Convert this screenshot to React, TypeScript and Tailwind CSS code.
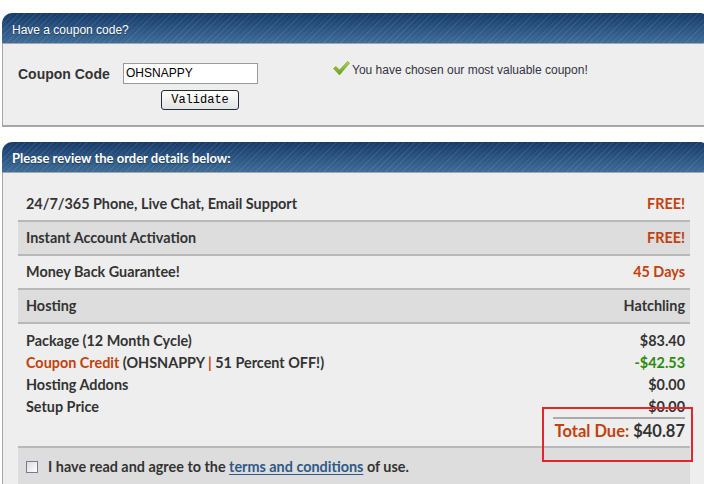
import React from "react";

const headerBg =
  "bg-[image:repeating-linear-gradient(135deg,rgba(255,255,255,0.08)_0px,rgba(255,255,255,0.08)_1px,transparent_1px,transparent_4px),linear-gradient(to_bottom,#163b69,#3e6b97)]";

function Check() {
  return (
    <svg width="17" height="15" viewBox="0 0 17 15">
      <defs>
        <linearGradient id="cg" x1="0" y1="0" x2="0" y2="1">
          <stop offset="0" stopColor="#a8d84a" />
          <stop offset="1" stopColor="#6b9e1c" />
        </linearGradient>
      </defs>
      <path d="M0.5 7.5 L3 5.5 L6.5 9 L14.5 0.5 L16.5 2 L6.5 14 Z" fill="url(#cg)" stroke="#6a9a22" strokeWidth="0.6" />
    </svg>
  );
}

function Row({ label, value, dark, valueClass }: { label: string; value: string; dark?: boolean; valueClass: string }) {
  return (
    <div
      className={`flex items-center justify-between h-[34px] border-b-2 border-[#b8b8b8] pl-[8px] pr-[5px] ${
        dark ? "bg-[#dddddd]" : ""
      }`}
    >
      <span className="text-[#333333]">{label}</span>
      <span className={valueClass}>{value}</span>
    </div>
  );
}

export default function App() {
  const lato = "font-['Lato','Open_Sans',sans-serif] font-bold";
  return (
    <div className="relative w-[704px] h-[484px] overflow-hidden bg-white pt-[13px] pl-[2px]">
      {/* Coupon panel */}
      <section className="w-[706px]">
        <div className={`h-[30px] rounded-tl-[10px] rounded-tr-[8px] ${headerBg} flex items-center pl-[10px] pt-[3px]`}>
          <span className="text-white text-[12px] font-['Liberation_Sans',Arial,sans-serif] [text-shadow:0_1px_1px_rgba(0,0,0,0.35)]">
            Have a coupon code?
          </span>
        </div>
        <div className="h-[84px] bg-[#eeeeee] border-l border-b-2 border-t border-[#a6a6a6] pl-[15px] pt-[19px] font-['Liberation_Sans',Arial,sans-serif]">
          <div className="flex items-start">
            <span className="w-[105px] text-[14px] font-bold text-[#333333] leading-[21px] mt-[1px]">Coupon Code</span>
            <div className="flex flex-col">
              <div className="w-[135px] h-[21px] bg-white border border-[#9a9a9a] text-[12px] leading-[19px] pl-[2px] text-black">
                OHSNAPPY
              </div>
              <button className="ml-[38px] mt-[6px] w-[78px] h-[20px] rounded-[3px] border border-[#1e2d3d] bg-[image:linear-gradient(to_bottom,#ffffff,#e2e2e2)] text-[12px] leading-[18px] font-['Liberation_Mono',monospace] text-black">
                Validate
              </button>
            </div>
            <div className="ml-[75px] -mt-[2px] flex items-start">
              <Check />
              <span className="ml-[2px] mt-[1px] text-[12px] text-[#333344] leading-[16px]">
                You have chosen our most valuable coupon!
              </span>
            </div>
          </div>
        </div>
      </section>

      {/* Order panel */}
      <section className="w-[706px] mt-[15px]">
        <div className={`h-[30px] rounded-tl-[10px] rounded-tr-[8px] ${headerBg} flex items-center pl-[10px] pt-[3px]`}>
          <span className={`text-white text-[13px] ${lato} [text-shadow:0_1px_1px_rgba(0,0,0,0.35)]`}>
            Please review the order details below:
          </span>
        </div>
        <div className={`h-[320px] bg-[#eeeeee] border-l border-t border-[#a6a6a6] pl-[15px] pt-[15px] text-[14.4px] ${lato}`}>
          <div className="w-[672px]">
            <Row label="24/7/365 Phone, Live Chat, Email Support" value="FREE!" valueClass="text-[#c2410c]" />
            <Row label="Instant Account Activation" value="FREE!" dark valueClass="text-[#c2410c]" />
            <Row label="Money Back Guarantee!" value="45 Days" valueClass="text-[#c2410c]" />
            <Row label="Hosting" value="Hatchling" dark valueClass="text-[#333333]" />

            <div className="pl-[8px] pr-[5px] pt-[6px] leading-[22px] text-[#333333]">
              <div className="flex justify-between">
                <span>Package (12 Month Cycle)</span>
                <span>$83.40</span>
              </div>
              <div className="flex justify-between">
                <span>
                  <span className="text-[#c2410c]">Coupon Credit</span> (OHSNAPPY <span className="text-[#c2410c]">|</span> 51 Percent OFF!)
                </span>
                <span className="text-[#2b8a0a]">-$42.53</span>
              </div>
              <div className="flex justify-between">
                <span>Hosting Addons</span>
                <span>$0.00</span>
              </div>
              <div className="flex justify-between">
                <span>Setup Price</span>
                <span>$0.00</span>
              </div>
              <div className="flex flex-col items-end">
                <div className="w-[132px] border-t-2 border-[#aaaaaa] mt-[-1px]" />
                <div className="text-[16.5px] leading-[24px]">
                  <span className="text-[#c2410c]">Total Due:</span> <span className="text-[#333333]">$40.87</span>
                </div>
              </div>
            </div>
            <div className="border-b-2 border-[#b8b8b8] mt-[3px]" />
            <div className="bg-[#dddddd] h-[38px] flex items-center pl-[8px] text-[#333333]">
              <span className="w-[12px] h-[12px] border border-[#6f7f94] bg-[image:linear-gradient(135deg,#dcdcdc,#ffffff)]" />
              <span className="ml-[10px]">
                I have read and agree to the{" "}
                <span className="text-[#2e5a87] underline underline-offset-2">terms and conditions</span> of use.
              </span>
            </div>
          </div>
        </div>
      </section>

      <div className="absolute left-[542px] top-[407px] w-[151px] h-[55px] border-2 border-[#e3262b]" />
    </div>
  );
}
